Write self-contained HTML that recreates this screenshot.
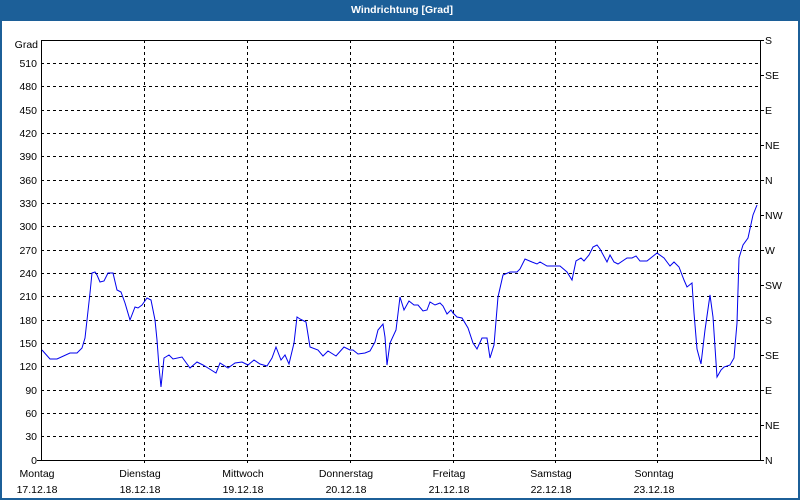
<!DOCTYPE html>
<html><head><meta charset="utf-8"><style>
html,body{margin:0;padding:0;width:800px;height:500px;overflow:hidden;background:#fff}
svg{display:block}
text{font-family:"Liberation Sans",sans-serif;font-size:10.5px;fill:#000}
</style></head><body>
<svg width="800" height="500" xmlns="http://www.w3.org/2000/svg">
<rect x="0" y="0" width="800" height="500" fill="#1c5f98"/>
<rect x="2" y="21" width="796" height="477" fill="#fff"/>
<text x="402" y="13" text-anchor="middle" style="font-weight:bold;font-size:10.5px;fill:#fff">Windrichtung [Grad]</text>
<g stroke="#000" stroke-width="1" stroke-dasharray="3,3" fill="none" shape-rendering="crispEdges">
<path d="M41 63.5H760M41 86.5H760M41 110.5H760M41 133.5H760M41 156.5H760M41 180.5H760M41 203.5H760M41 226.5H760M41 250.5H760M41 273.5H760M41 296.5H760M41 320.5H760M41 343.5H760M41 366.5H760M41 390.5H760M41 413.5H760M41 436.5H760"/>
<path d="M144.5 40V466M247.5 40V466M350.5 40V466M453.5 40V466M555.5 40V466M657.5 40V466"/>
</g>
<g stroke="#000" stroke-width="1" fill="none" shape-rendering="crispEdges">
<path d="M41.5 40V460.5M41 40.5H760.5V460M41 460.5H760.5"/>
<path d="M37 460.5H41M760 40.5H764M760 75.5H764M760 110.5H764M760 145.5H764M760 180.5H764M760 215.5H764M760 250.5H764M760 285.5H764M760 320.5H764M760 355.5H764M760 390.5H764M760 425.5H764M760 460.5H764"/>
</g>
<g text-anchor="end">
<text x="38" y="48">Grad</text>
<text x="37" y="67">510</text><text x="37" y="90">480</text><text x="37" y="114">450</text><text x="37" y="137">420</text><text x="37" y="160">390</text><text x="37" y="184">360</text><text x="37" y="207">330</text><text x="37" y="230">300</text><text x="37" y="254">270</text><text x="37" y="277">240</text><text x="37" y="300">210</text><text x="37" y="324">180</text><text x="37" y="347">150</text><text x="37" y="370">120</text><text x="37" y="394">90</text><text x="37" y="417">60</text><text x="37" y="440">30</text><text x="37" y="464">0</text>
</g>
<g>
<text x="765" y="44">S</text><text x="765" y="79">SE</text><text x="765" y="114">E</text><text x="765" y="149">NE</text><text x="765" y="184">N</text><text x="765" y="219">NW</text><text x="765" y="254">W</text><text x="765" y="289">SW</text><text x="765" y="324">S</text><text x="765" y="359">SE</text><text x="765" y="394">E</text><text x="765" y="429">NE</text><text x="765" y="464">N</text>
</g>
<g text-anchor="middle">
<text x="37" y="477">Montag</text><text x="37" y="493">17.12.18</text>
<text x="140" y="477">Dienstag</text><text x="140" y="493">18.12.18</text>
<text x="243" y="477">Mittwoch</text><text x="243" y="493">19.12.18</text>
<text x="346" y="477">Donnerstag</text><text x="346" y="493">20.12.18</text>
<text x="449" y="477">Freitag</text><text x="449" y="493">21.12.18</text>
<text x="551" y="477">Samstag</text><text x="551" y="493">22.12.18</text>
<text x="654" y="477">Sonntag</text><text x="654" y="493">23.12.18</text>
</g>
<polyline fill="none" stroke="#0000ee" stroke-width="1" points="42,350 50,359 57,359 70,353 77,353 82,348 85,338 87,320 90,293 92,273 95,272 97,275 100,282 104,281 108,273 113,273 117,290 121,292 125,303 130,320 135,307 138,308 142,305 147,298 151,300 155,320 157,340 159,367 161,387 164,358 169,355 173,359 182,357 190,368 197,362 203,365 208,368 216,373 220,363 228,368 235,363 242,362 248,365 254,360 260,364 267,366 272,358 276,347 281,360 285,355 289,364 294,343 297,317 300,319 306,322 310,347 318,350 323,356 328,351 336,356 344,347 350,350 353,350 358,354 365,353 370,351 375,342 378,330 383,324 385,337 387,365 390,343 396,330 400,297 404,310 409,301 414,305 418,305 423,311 427,310 430,302 435,305 440,303 443,306 447,314 451,310 453,313 457,317 462,318 468,328 473,343 477,349 482,338 487,338 490,358 494,345 498,297 503,275 510,272 517,272 520,269 525,259 532,262 537,264 540,262 547,266 560,266 567,272 572,280 576,261 581,258 584,261 589,255 593,247 597,245 600,249 607,262 610,255 614,262 618,264 627,258 632,258 636,256 640,261 647,261 652,257 657,253 664,258 670,266 674,262 679,267 684,280 687,287 692,283 694,313 697,349 701,364 705,330 710,295 713,317 717,377 721,370 724,367 730,365 734,358 737,323 739,258 743,245 748,238 753,215 757,205"/>
</svg>
</body></html>
